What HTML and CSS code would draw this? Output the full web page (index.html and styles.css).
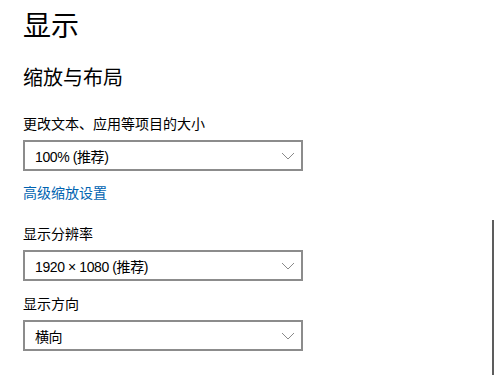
FILE: index.html
```html
<!DOCTYPE html>
<html>
<head>
    <title>显示</title>
    <link rel="stylesheet" href="styles.css">
</head>
<body>
    <h1 class="page-title">显示</h1>
    <h2 class="section-title">缩放与布局</h2>

    <div class="field-label first">更改文本、应用等项目的大小</div>
    <div class="select">
        <span>100% (推荐)</span>
        <svg class="chevron" width="14" height="8" viewBox="0 0 14 8"><path d="M1 1 L7 7 L13 1" fill="none" stroke="#8a8a8a" stroke-width="1"/></svg>
    </div>
    <a class="link" href="#">高级缩放设置</a>

    <div class="field-label spaced">显示分辨率</div>
    <div class="select">
        <span>1920 × 1080 (推荐)</span>
        <svg class="chevron" width="14" height="8" viewBox="0 0 14 8"><path d="M1 1 L7 7 L13 1" fill="none" stroke="#8a8a8a" stroke-width="1"/></svg>
    </div>

    <div class="field-label">显示方向</div>
    <div class="select">
        <span>横向</span>
        <svg class="chevron" width="14" height="8" viewBox="0 0 14 8"><path d="M1 1 L7 7 L13 1" fill="none" stroke="#8a8a8a" stroke-width="1"/></svg>
    </div>

    <div class="scrollbar"></div>
</body>
</html>
```

FILE: styles.css
```css
body {
    margin: 0;
    padding: 0 0 0 23px;
    font-family: "Liberation Sans", "Noto Sans CJK SC", sans-serif;
    color: #000;
    background: #fff;
    overflow: hidden;
}
.page-title {
    margin: 7px 0 0;
    font-size: 28px;
    font-weight: normal;
    line-height: 40px;
    height: 40px;
}
.section-title {
    margin: 17px 0 0;
    font-size: 20px;
    font-weight: normal;
    line-height: 28px;
    height: 28px;
}
.field-label {
    margin-top: 13px;
    font-size: 14px;
    line-height: 20px;
    height: 20px;
}
.field-label.first {
    margin-top: 22px;
}
.field-label.spaced {
    margin-top: 21px;
}
.select {
    box-sizing: border-box;
    margin-top: 6px;
    width: 280px;
    height: 31px;
    border: 2px solid #8c8c8c;
    display: flex;
    align-items: center;
    justify-content: space-between;
    padding: 0 6px 0 10px;
    font-size: 14px;
    letter-spacing: -0.4px;
}
.link {
    display: block;
    margin-top: 12px;
    font-size: 14px;
    line-height: 20px;
    height: 20px;
    color: #0063b1;
    text-decoration: none;
}
.scrollbar {
    position: fixed;
    right: 2px;
    top: 220px;
    bottom: 0;
    width: 2px;
    background: #5d5d5d;
}
```
